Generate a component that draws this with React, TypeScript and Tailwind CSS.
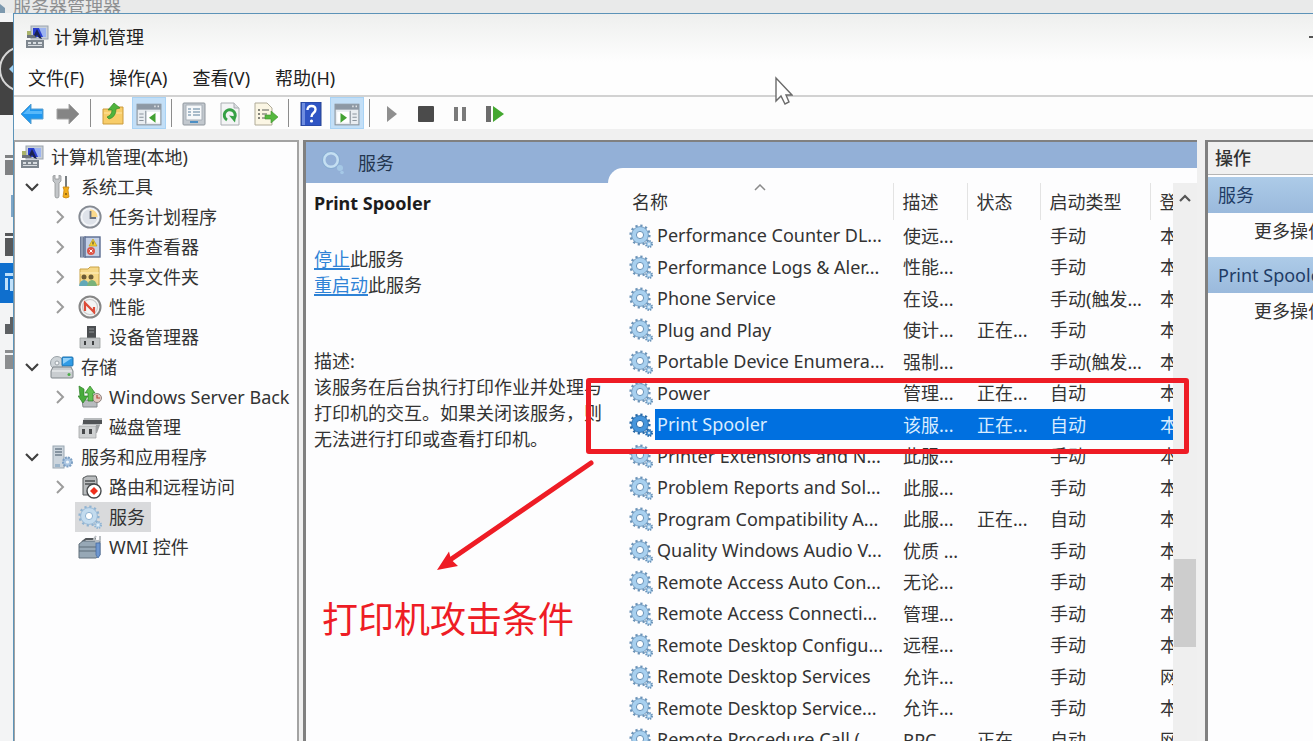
import type { ReactNode } from "react";

function Svg({ children, className = "size-6" }: { children: ReactNode; className?: string }) {
  return (
    <svg viewBox="0 0 24 24" fill="none" className={`${className} shrink-0`} aria-hidden="true">
      {children}
    </svg>
  );
}

/* ---------- tree icons ---------- */

const ComputerIcon = () => (
  <Svg>
    <rect x="6" y="1" width="17" height="13" fill="#c9d0d8" stroke="#9aa3ad" />
    <rect x="8" y="3" width="13" height="9" fill="#2a3fd0" />
    <path d="M14 3h7v9h-3z" fill="#9db4f0" />
    <path d="M2 6h4v4H2z" fill="#a9b36a" />
    <path d="M8 12l4-8 5 10-3-1-2-3-2 3z" fill="#1a2350" />
    <path d="M2 10h7l3 3H2z" fill="#6d747c" />
    <rect x="1" y="15" width="18" height="8" fill="#7e868e" />
    <path d="M3 17h3v2H3zM8 17h3v2H8zM13 17h4v2h-4zM3 20h14v1H3z" fill="#d9dde1" />
  </Svg>
);

const ToolsIcon = () => (
  <Svg>
    <path d="M3 1v5l2 2v13q0 2 2 2t2-2V8l2-2V1L9 0v4H5V0z" fill="#c3c6c9" stroke="#8f9396" strokeWidth=".8" />
    <path d="M15 1h2v11h-2z" fill="#777c80" />
    <path d="M13 12h6l-1 3 1 7q-3 2-6 0l1-7z" fill="#f2ad1c" stroke="#c88712" strokeWidth=".8" />
    <circle cx="16" cy="19" r="1.1" fill="#8a6010" />
  </Svg>
);

const ClockIcon = () => (
  <Svg>
    <circle cx="12" cy="12" r="10.7" fill="#dfe3ea" stroke="#858a92" strokeWidth="1.8" />
    <path d="M12 4a8 8 0 0 1 8 8h-8z" fill="#fbd98c" />
    <circle cx="12" cy="12" r="8.4" stroke="#f7f8fa" strokeWidth="1.4" />
    <path d="M12.5 6v7H18" stroke="#6d7480" strokeWidth="1.8" />
  </Svg>
);

const EventIcon = () => (
  <Svg>
    <rect x="2" y="1.500" width="6" height="21" fill="#6d7b96" />
    <path d="M4 2v20M6.500 2v20" stroke="#b4bfd2" />
    <rect x="7" y="2" width="15" height="20" fill="#c4d0e6" stroke="#5b6c90" strokeWidth="1.400" />
    <path d="M15 4l4 7h-8z" fill="#f6cf34" stroke="#c19c18" strokeWidth=".7" />
    <path d="M15 6.500v3" stroke="#333" />
    <circle cx="13" cy="16" r="4" fill="#dc5548" />
    <path d="M11.500 14.500l3 3m0-3l-3 3" stroke="#fff" />
  </Svg>
);

const ShareIcon = () => (
  <Svg>
    <path d="M2 4h8l2-2h9v18H2z" fill="#f6d888" stroke="#c9a247" />
    <path d="M2 8h19" stroke="#fff0c2" />
    <circle cx="6" cy="12" r="2.500" fill="#6b5a35" />
    <circle cx="13" cy="12" r="2.500" fill="#6b5a35" />
    <path d="M1 21q1-6 5-6t5 6z" fill="#62a8b8" />
    <path d="M9 21q1-6 5-6t5 6z" fill="#7ab27a" />
  </Svg>
);

const PerfIcon = () => (
  <Svg>
    <circle cx="12" cy="12" r="10.500" fill="#f4f4f4" stroke="#868686" strokeWidth="2" />
    <circle cx="12" cy="12" r="7.500" stroke="#c9c9c9" strokeWidth="1.200" />
    <path d="M7 16V8l9 9v-5" stroke="#dc4b38" strokeWidth="2.200" />
  </Svg>
);

const DeviceIcon = () => (
  <Svg>
    <rect x="9" y="1" width="9" height="12" fill="#4b4e51" />
    <path d="M11 4h5M11 7h5" stroke="#8d9194" />
    <path d="M2 13h20v10H2z" fill="#c2c5c7" stroke="#9b9ea0" strokeWidth=".8" />
    <path d="M6 16h2v4H6zM14 16h2v4h-2z" fill="#3d3f41" />
  </Svg>
);

const StorageIcon = () => (
  <Svg>
    <circle cx="7" cy="8" r="6.500" fill="#ced4d8" stroke="#9aa2a8" />
    <circle cx="7" cy="8" r="2" fill="#f6f8f9" stroke="#9aa2a8" />
    <rect x="12" y="2" width="11" height="9" rx="1" fill="#2f9be6" stroke="#1d70ad" />
    <path d="M13 3h9l-9 6z" fill="#8fd0fa" />
    <path d="M3 12h18l2 4v6q0 1-1 1H2q-1 0-1-1v-6z" fill="#c9cdd0" stroke="#7f8589" />
    <path d="M2 16h20" stroke="#f3f5f6" />
    <circle cx="19" cy="19.500" r="1.500" fill="#4cab48" />
  </Svg>
);

const BackupIcon = () => (
  <Svg>
    <path d="M4 15h15v7H5z" fill="#b8bcbf" stroke="#858a8d" />
    <circle cx="19" cy="13" r="4.500" fill="#e4c9c0" stroke="#8f8480" />
    <path d="M19 10v3h3" stroke="#b24a3d" strokeWidth="1.200" />
    <path d="M1 1l5 3v7h4l-5 7-5-7h2z" fill="#48ac3c" stroke="#2f7f28" strokeWidth=".7" />
    <path d="M10 16V8H7l5-7 5 7h-2v8z" fill="#5fc04f" stroke="#2f7f28" strokeWidth=".7" />
  </Svg>
);

const DiskIcon = () => (
  <Svg>
    <path d="M6 3h18v3l-2 4H4z" fill="#b8bbbd" />
    <path d="M5 5h19v4H5z" fill="#505356" />
    <path d="M18 10h4l-3 8h-1z" fill="#9ea1a3" />
    <path d="M1 11h17v12H1z" fill="#cfd1d2" stroke="#a2a5a6" strokeWidth=".8" />
    <path d="M4 14h3v5H4zM11 14h3v5h-3z" fill="#484a4c" />
  </Svg>
);

const AppsIcon = () => (
  <Svg>
    <rect x="3" y="1" width="11" height="22" fill="#ccd5dd" stroke="#9aa7b2" />
    <path d="M5 4h7M5 7h7M5 10h7" stroke="#6f7f8d" strokeWidth="1.300" />
    <circle cx="17.500" cy="17" r="4.500" fill="#a9c5e2" stroke="#7d9fc3" strokeWidth="2" strokeDasharray="2 1" />
    <circle cx="17.500" cy="17" r="1.600" fill="#eff5fa" />
    <path d="M5 19h5v3H5z" fill="#9cb5ca" />
  </Svg>
);

const RouteIcon = () => (
  <Svg>
    <path d="M5 3l4-2h9l1 3v16H5z" fill="#b9bcbe" stroke="#55585a" />
    <path d="M7 6h10M7 9h10" stroke="#4c4f51" strokeWidth="1.500" />
    <circle cx="16" cy="16" r="7" fill="#fff" stroke="#45484a" strokeWidth="1.400" />
    <path d="M16 12l4 4-4 4-4-4z" fill="#ee2f1c" />
  </Svg>
);

const WmiIcon = () => (
  <Svg>
    <path d="M4 7l4-3h9v4" stroke="#53585c" strokeWidth="2" />
    <path d="M1 9l4-3h17v14l-4 3H1z" fill="#97a8b6" stroke="#62717d" />
    <path d="M1 12h17M1 16h17" stroke="#5e6d79" strokeWidth="1.200" />
    <path d="M18 1l-2 3 3 3 3-2v-4" stroke="#b9bec2" strokeWidth="2" />
    <path d="M18 8h4v12l-2 3-2-3z" fill="#6f97cf" stroke="#476da3" strokeWidth=".8" />
  </Svg>
);

function GearIcon({ active = false, pale = false }: { active?: boolean; pale?: boolean }) {
  const body = active ? "#4796dc" : pale ? "#c3dbee" : "#a8d0ef";
  const line = active ? "#2769a8" : pale ? "#8fb3d2" : "#6b93b8";
  return (
    <Svg>
      <circle cx="11" cy="11" r="9.300" stroke={line} strokeWidth="2.600" strokeDasharray="2.200 2.669" />
      <circle cx="11" cy="11" r="6" fill="#fff" stroke={body} strokeWidth="5" />
      <circle cx="11" cy="11" r="8.400" stroke={line} strokeWidth=".8" />
      <circle cx="11" cy="11" r="3.600" stroke={line} strokeWidth="1" />
      <circle cx="20" cy="20" r="3" fill={body} stroke={line} strokeWidth="2" strokeDasharray="1.400 .95" />
      <circle cx="20" cy="20" r="1" fill="#eaf4fb" />
    </Svg>
  );
}

/* ---------- tool bar icons ---------- */

const BackIcon = () => (
  <Svg>
    <path d="M1 12L11 2v5h12v10H11v5z" fill="#1f97f0" stroke="#5a9fce" />
    <path d="M3 12l7-7v4h12v3z" fill="#58b8fa" />
  </Svg>
);
const ForwardIcon = () => (
  <Svg>
    <path d="M23 12L13 2v5H1v10h12v5z" fill="#858585" stroke="#a5a5a5" />
  </Svg>
);
const FolderUpIcon = () => (
  <Svg>
    <path d="M2 7h8l2-2h10v17H2z" fill="#f8cd69" stroke="#cb9b3d" />
    <path d="M3 11h18" stroke="#ffe6a3" />
    <path d="M6 15q5-2 5-7H7l6-7 6 5-4 1q0 8-7 10z" fill="#4fb43c" stroke="#378a2a" strokeWidth=".7" />
  </Svg>
);
function PaneIcon({ flip = false }: { flip?: boolean }) {
  return (
    <Svg className="size-[26px]">
      <rect x="1" y="3" width="22" height="19" fill="#e9edf1" stroke="#8b949d" />
      <path d="M1 3h22v5H1z" fill="#8d98a4" />
      <path d="M17 5h1M20 5h1" stroke="#fff" strokeWidth="1.500" />
      {flip ? (
        <>
          <path d="M3 10h11v10H3z" fill="#fff" />
          <path d="M6 11l6 4.500-6 4.500z" fill="#43a233" />
          <path d="M15 9v12M17 12h4M17 15h4M17 18h4" stroke="#8b949d" />
        </>
      ) : (
        <>
          <path d="M10 10h12v10H10z" fill="#fff" />
          <path d="M18 11l-6 4.500 6 4.500z" fill="#43a233" />
          <path d="M9 9v12M3 12h4M3 15h4M3 18h4" stroke="#8b949d" />
        </>
      )}
    </Svg>
  );
}
const PropertiesIcon = () => (
  <Svg>
    <rect x="1" y="1" width="22" height="22" rx="1" fill="#c2c8ce" stroke="#8f969d" />
    <path d="M4 3h16v15H4z" fill="#f6f8fa" stroke="#a8b0b8" />
    <path d="M6 7h3M11 7h7M6 10h3M11 10h7M6 13h3M11 13h7" stroke="#8fa6bb" strokeWidth="1.300" />
    <path d="M8 20h8" stroke="#4d8fc4" strokeWidth="2" />
  </Svg>
);
const RefreshIcon = () => (
  <Svg>
    <path d="M3 1h13l5 5v17H3z" fill="#f3f4f5" stroke="#aaaeb2" />
    <path d="M16 1v5h5" fill="#d9dcdf" stroke="#aaaeb2" />
    <path d="M9 18a5.500 5.500 0 1 1 7.500-2" stroke="#36a146" strokeWidth="3" />
    <path d="M11 13.500l7 1-1 6z" fill="#36a146" />
  </Svg>
);
const ExportIcon = () => (
  <Svg>
    <path d="M1 1h12l5 5v17H1z" fill="#fbf6e4" stroke="#b0ab98" />
    <path d="M4 8h2M4 12h2M4 16h2" stroke="#5f6058" strokeWidth="1.500" />
    <path d="M8 8h7M8 12h5M8 16h4" stroke="#8f9085" strokeWidth="1.500" />
    <path d="M11 13h6v-4l7 6-7 6v-4h-6z" fill="#55b83f" stroke="#3c912b" strokeWidth=".6" />
  </Svg>
);
const HelpIcon = () => (
  <Svg>
    <rect x="2" y="0" width="20" height="24" fill="#2f55c4" stroke="#26428f" />
    <path d="M3 1h3v22H3z" fill="#6f8ee0" />
    <path d="M8.500 8q0-4 4-4t4 3.500q0 2-2 3.500t-2 4" stroke="#fff" strokeWidth="2.400" />
    <circle cx="12.500" cy="19" r="1.600" fill="#fff" />
  </Svg>
);
const PlayIcon = () => (
  <Svg>
    <path d="M7 4l10 8-10 8z" fill="#8f8f8f" />
  </Svg>
);
const StopIcon = () => (
  <Svg>
    <rect x="4" y="4" width="16" height="16" rx="1" fill="#4b4b4b" />
  </Svg>
);
const PauseIcon = () => (
  <Svg>
    <path d="M6 5h4v14H6zM14 5h4v14h-4z" fill="#7a7a7a" />
  </Svg>
);
const RestartIcon = () => (
  <Svg>
    <path d="M4 4h5v16H4z" fill="#6c6c6c" />
    <path d="M11 4l11 8-11 8z" fill="#44a830" />
  </Svg>
);

/* ---------- data ---------- */

type Node = { level: 0 | 1 | 2; label: string; icon: ReactNode; open?: boolean; expandable?: boolean; selected?: boolean };

const tree: Node[] = [
  { level: 0, label: "计算机管理(本地)", icon: <ComputerIcon /> },
  { level: 1, label: "系统工具", icon: <ToolsIcon />, open: true },
  { level: 2, label: "任务计划程序", icon: <ClockIcon />, expandable: true },
  { level: 2, label: "事件查看器", icon: <EventIcon />, expandable: true },
  { level: 2, label: "共享文件夹", icon: <ShareIcon />, expandable: true },
  { level: 2, label: "性能", icon: <PerfIcon />, expandable: true },
  { level: 2, label: "设备管理器", icon: <DeviceIcon /> },
  { level: 1, label: "存储", icon: <StorageIcon />, open: true },
  { level: 2, label: "Windows Server Back", icon: <BackupIcon />, expandable: true },
  { level: 2, label: "磁盘管理", icon: <DiskIcon /> },
  { level: 1, label: "服务和应用程序", icon: <AppsIcon />, open: true },
  { level: 2, label: "路由和远程访问", icon: <RouteIcon />, expandable: true },
  { level: 2, label: "服务", icon: <GearIcon pale />, selected: true },
  { level: 2, label: "WMI 控件", icon: <WmiIcon /> },
];

const services: [string, string, string, string, string][] = [
  ["Performance Counter DL...", "使远...", "", "手动", "本"],
  ["Performance Logs & Aler...", "性能...", "", "手动", "本"],
  ["Phone Service", "在设...", "", "手动(触发...", "本"],
  ["Plug and Play", "使计...", "正在...", "手动", "本"],
  ["Portable Device Enumera...", "强制...", "", "手动(触发...", "本"],
  ["Power", "管理...", "正在...", "自动", "本"],
  ["Print Spooler", "该服...", "正在...", "自动", "本"],
  ["Printer Extensions and N...", "此服...", "", "手动", "本"],
  ["Problem Reports and Sol...", "此服...", "", "手动", "本"],
  ["Program Compatibility A...", "此服...", "正在...", "自动", "本"],
  ["Quality Windows Audio V...", "优质 ...", "", "手动", "本"],
  ["Remote Access Auto Con...", "无论...", "", "手动", "本"],
  ["Remote Access Connecti...", "管理...", "", "手动", "本"],
  ["Remote Desktop Configu...", "远程...", "", "手动", "本"],
  ["Remote Desktop Services", "允许...", "", "手动", "网"],
  ["Remote Desktop Service...", "允许...", "", "手动", "本"],
  ["Remote Procedure Call (...", "RPC...", "正在...", "自动", "网"],
];

/* ---------- parts ---------- */

function ToolButton({ label, on = false, children }: { label: string; on?: boolean; children: ReactNode }) {
  return (
    <button
      type="button"
      aria-label={label}
      className={`flex h-8 w-[34px] items-center justify-center pt-[2px] ${on ? "border border-[#a9d3f5] bg-[#c3dff7]" : ""}`}
    >
      {children}
    </button>
  );
}

const Separator = () => <span className="mx-[3px] h-7 w-px bg-[#8c8c8c]" />;

function TreeRow({ node }: { node: Node }) {
  const indent = node.level === 2 ? "pl-[33px]" : "pl-[5px]";
  return (
    <li className={`flex h-[30px] items-center whitespace-nowrap ${indent}`}>
      {node.level > 0 && (
        <span className="mr-[3px] flex w-6 justify-center">
          {node.open && (
            <svg viewBox="0 0 14 9" className="h-[9px] w-[14px]" fill="none" aria-hidden="true">
              <path d="M1 1l6 6 6-6" stroke="#404040" strokeWidth="2.200" />
            </svg>
          )}
          {node.expandable && (
            <svg viewBox="0 0 9 14" className="h-[14px] w-[9px]" fill="none" aria-hidden="true">
              <path d="M1 1l6 6-6 6" stroke="#9c9c9c" strokeWidth="2" />
            </svg>
          )}
        </span>
      )}
      <span className={`flex h-[30px] items-center gap-[7px] ${node.level > 0 ? "px-[3px]" : ""} ${node.selected ? "bg-[#d9dadc]" : ""}`}>
        {node.icon}
        <span className="pr-[3px]">{node.label}</span>
      </span>
    </li>
  );
}

function ServerManagerRail() {
  return (
    <svg className="w-[13px] shrink-0" height="741" viewBox="0 0 13 741" fill="none" aria-hidden="true">
      <rect width="13" height="741" fill="#f3f4f5" />
      <rect y="9" width="13" height="93" fill="#434343" />
      <circle cx="22" cy="56" r="22" stroke="#d6d6d6" strokeWidth="2" />
      <path d="M13 52l-4 4 4 4z" fill="#9fd0f2" />
      <path d="M5 142h8v3H5zM5 147h8v15H5z" fill="#7f8183" />
      <path d="M11 182h2v22h-2z" fill="#7ea5c6" />
      <path d="M5 220h8v3H5zM5 225h8v18H5z" fill="#56585a" />
      <rect y="250" width="13" height="40" fill="#0f6fce" />
      <path d="M5 260h8v3H5zM5 265h3v12H5zM10 266h3v12h-3z" fill="#bfe0fa" />
      <path d="M10 304h3v7h-3zM5 311h8v10H5z" fill="#5d6063" />
      <path d="M5 337h8v3H5zM5 342h8v14H5z" fill="#8b8d8f" />
    </svg>
  );
}

function ServiceList() {
  return (
    <section className="-mt-[15px] flex min-w-0 flex-1 overflow-hidden rounded-tl-[15px] bg-[#fdfdfe] pt-[15px]">
      <div className="relative min-w-0 flex-1">
        <table className="w-full table-fixed border-collapse">
          <colgroup>
            <col />
            <col className="w-[74px]" />
            <col className="w-[73px]" />
            <col className="w-[110px]" />
            <col className="w-[23px]" />
          </colgroup>
          <thead>
            <tr className="h-[37px] text-left">
              <th className="p-0 pl-6 font-normal">名称</th>
              {["描述", "状态", "启动类型", "登"].map((h) => (
                <th key={h} className="overflow-hidden border-l border-[#e3e3e3] p-0 pl-[9px] font-normal whitespace-nowrap">
                  {h}
                </th>
              ))}
            </tr>
          </thead>
          <tbody>
            {services.map(([name, desc, status, start, logon]) => {
              const active = name === "Print Spooler";
              const cell = active ? "bg-[#0070e0] text-[#d8ecff]" : "";
              return (
                <tr key={name} className="odd:h-[31px] even:h-8">
                  <td className="p-0 pl-[21px]">
                    <div className="flex items-center gap-[2px]">
                      <GearIcon active={active} />
                      <span className={`h-[31px] flex-1 overflow-hidden pl-[2px] leading-[31px] whitespace-nowrap ${cell}`}>{name}</span>
                    </div>
                  </td>
                  {[desc, status, start, logon].map((value, i) => (
                    <td key={i} className={`overflow-hidden p-0 pl-[10px] leading-[30px] whitespace-nowrap ${cell}`}>
                      {value}
                    </td>
                  ))}
                </tr>
              );
            })}
          </tbody>
        </table>
        <svg viewBox="0 0 12 7" className="absolute top-px left-[146px] h-[7px] w-3" fill="none" aria-hidden="true">
          <path d="M1 6l5-5 5 5" stroke="#8a8a8a" strokeWidth="1.500" />
        </svg>
      </div>
      <div className="flex w-6 flex-col items-center bg-[#efefef]" aria-hidden="true">
        <svg viewBox="0 0 12 8" className="mt-[11px] h-2 w-3" fill="none">
          <path d="M1 7l5-5 5 5" stroke="#555" strokeWidth="2.200" />
        </svg>
        <div className="mt-[357px] h-[88px] w-[22px] bg-[#cdcdcd]" />
      </div>
    </section>
  );
}

function ServiceDetails() {
  return (
    <section className="w-[302px] shrink-0 pt-[7px] pl-2 leading-[26px]">
      <h2 className="font-bold text-[#1c1c1c]">Print Spooler</h2>
      <p className="mt-[30px]">
        <a href="#stop" className="text-[#2f83d6] underline decoration-2 underline-offset-2">停止</a>此服务
      </p>
      <p>
        <a href="#restart" className="text-[#2f83d6] underline decoration-2 underline-offset-2">重启动</a>此服务
      </p>
      <p className="mt-[50px]">描述:</p>
      <p>该服务在后台执行打印作业并处理与打印机的交互。如果关闭该服务，则无法进行打印或查看打印机。</p>
    </section>
  );
}

function ActionsPane() {
  const bar = "flex h-9 w-full items-center bg-linear-to-b from-[#adcbe8] to-[#9ab9dc] pl-[10px] text-[#1f3c66]";
  const more = "flex h-9 w-full items-center pl-[46px]";
  return (
    <aside className="w-[108px] shrink-0 overflow-hidden border-t-2 border-l-[3px] border-[#808080] bg-[#fdfdfe] whitespace-nowrap">
      <h2 className="mb-[2px] flex h-[33px] items-center border-b border-[#b5b5b5] bg-[#f0f0f0] pl-[7px] font-medium">操作</h2>
      <button type="button" className={bar}>服务</button>
      <button type="button" className={more}>更多操作</button>
      <button type="button" className={`mt-2 ${bar}`}>Print Spooler</button>
      <button type="button" className={more}>更多操作</button>
    </aside>
  );
}

function Annotations() {
  return (
    <>
      <div className="pointer-events-none absolute top-[378px] left-[586px] h-[76px] w-[603px] rounded-[3px] border-[5px] border-[#ee1c25]" />
      <svg viewBox="0 0 160 114" className="pointer-events-none absolute top-[459px] left-[435px] h-[114px] w-[160px]" aria-hidden="true">
        <path d="M156 4L12 103" stroke="#ee1c25" strokeWidth="5" strokeLinecap="round" />
        <path d="M2 111L14 92.500l2 8L23 107z" fill="#ee1c25" />
      </svg>
      <p className="pointer-events-none absolute top-[598px] left-[322px] text-[36px] leading-[44px] text-[#ee1c25]">打印机攻击条件</p>
      <svg viewBox="0 0 18 29" className="pointer-events-none absolute top-[76px] left-[775px] h-[29px] w-[18px]" aria-hidden="true">
        <path d="M1 2v23l5-5 4 8 4-2-3-7h6z" fill="#fff" stroke="#6b6b6b" strokeWidth="1.400" />
      </svg>
    </>
  );
}

export default function App() {
  return (
    <div className="relative flex h-screen flex-col overflow-hidden bg-[#e9eaea] font-['Noto_Sans','Noto_Sans_CJK_SC',sans-serif] text-[18px] leading-[26px] text-[#333]">
      <div className="flex h-[13px] shrink-0 items-center gap-[6px] overflow-hidden whitespace-nowrap text-[#8d8f91]">
        <svg viewBox="0 0 7 13" className="h-[13px] w-[7px]" aria-hidden="true">
          <path d="M0 4l5 4v5H0z" fill="#7c98ae" />
        </svg>
        <span>服务器管理器</span>
      </div>
      <div className="flex min-h-0 flex-1">
        <ServerManagerRail />
        <main className="flex min-w-0 flex-1 flex-col border-t border-l border-[#5c93b8] bg-[#f0f0f0]">
          <header className="bg-linear-to-b from-[#eeefee] to-[#fefefe] to-60%">
            <div className="flex h-[46px] items-center justify-between pl-[11px]">
              <h1 className="flex items-center gap-[5px] text-[#222]">
                <ComputerIcon />
                计算机管理
              </h1>
              <button type="button" aria-label="最小化" className="h-6 w-[4px]">
                <span className="block h-[2px] bg-[#555]" />
              </button>
            </div>
            <nav className="flex h-[35px] items-center gap-[25px] pl-[14px] text-[#222]">
              {["文件(F)", "操作(A)", "查看(V)", "帮助(H)"].map((m) => (
                <button type="button" key={m}>{m}</button>
              ))}
            </nav>
          </header>
          <div className="flex items-center gap-[2px] border-t-2 border-[#d2d2d2] bg-[#fdfdfd] pl-px" role="toolbar">
            <ToolButton label="后退"><BackIcon /></ToolButton>
            <ToolButton label="前进"><ForwardIcon /></ToolButton>
            <Separator />
            <ToolButton label="上一级"><FolderUpIcon /></ToolButton>
            <ToolButton label="显示/隐藏控制台树" on><PaneIcon /></ToolButton>
            <Separator />
            <ToolButton label="属性"><PropertiesIcon /></ToolButton>
            <ToolButton label="刷新"><RefreshIcon /></ToolButton>
            <ToolButton label="导出列表"><ExportIcon /></ToolButton>
            <Separator />
            <ToolButton label="帮助"><HelpIcon /></ToolButton>
            <ToolButton label="显示/隐藏操作窗格" on><PaneIcon flip /></ToolButton>
            <Separator />
            <div className="flex">
              <ToolButton label="启动服务"><PlayIcon /></ToolButton>
              <ToolButton label="停止服务"><StopIcon /></ToolButton>
              <ToolButton label="暂停服务"><PauseIcon /></ToolButton>
              <ToolButton label="重启动服务"><RestartIcon /></ToolButton>
            </div>
          </div>
          <div className="mt-[11px] flex min-h-0 flex-1">
            <ul className="w-[285px] shrink-0 overflow-hidden border-t-2 border-r-2 border-l border-[#a3a3a3] bg-[#fdfdfe]">
              {tree.map((n) => (
                <TreeRow key={n.label} node={n} />
              ))}
            </ul>
            <div className="mr-2 ml-1 flex min-w-0 flex-1 flex-col border-t-2 border-l-[3px] border-[#808080] bg-[#fdfdfe]">
              <h2 className="flex h-[41px] shrink-0 items-center gap-3 bg-[#93b0d7] pl-4 text-[#24364f]">
                <Svg>
                  <circle cx="9" cy="9" r="7" stroke="#c4dff2" strokeWidth="3" />
                  <circle cx="9" cy="9" r="8.500" stroke="#7ba3cc" strokeWidth=".8" />
                  <circle cx="18" cy="17" r="3" fill="#a5c8e6" />
                  <circle cx="20" cy="21.500" r="1.800" fill="#a5c8e6" />
                </Svg>
                服务
              </h2>
              <div className="flex min-h-0 flex-1">
                <ServiceDetails />
                <ServiceList />
              </div>
            </div>
            <ActionsPane />
          </div>
        </main>
      </div>
      <Annotations />
    </div>
  );
}
